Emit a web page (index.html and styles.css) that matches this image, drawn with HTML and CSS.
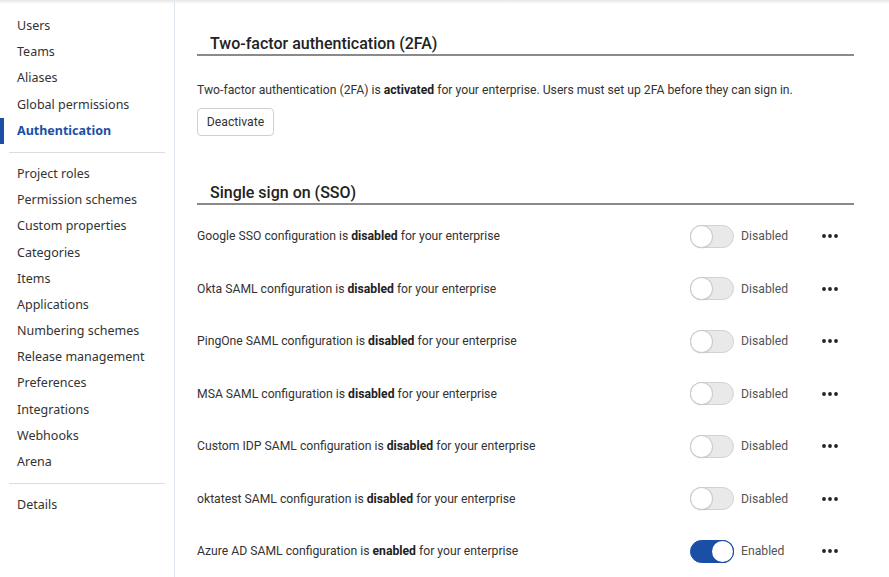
FILE: index.html
```
<!DOCTYPE html>
<html>
<head>
<meta charset="utf-8">
<link rel="stylesheet" href="styles.css">
</head>
<body>
<div class="topshade"></div>
<div class="page">
  <nav class="sidebar">
    <ul class="nav-group">
      <li class="nav-item">Users</li>
      <li class="nav-item">Teams</li>
      <li class="nav-item">Aliases</li>
      <li class="nav-item">Global permissions</li>
      <li class="nav-item active">Authentication</li>
    </ul>
    <hr class="nav-divider">
    <ul class="nav-group">
      <li class="nav-item">Project roles</li>
      <li class="nav-item">Permission schemes</li>
      <li class="nav-item">Custom properties</li>
      <li class="nav-item">Categories</li>
      <li class="nav-item">Items</li>
      <li class="nav-item">Applications</li>
      <li class="nav-item">Numbering schemes</li>
      <li class="nav-item">Release management</li>
      <li class="nav-item">Preferences</li>
      <li class="nav-item">Integrations</li>
      <li class="nav-item">Webhooks</li>
      <li class="nav-item">Arena</li>
    </ul>
    <hr class="nav-divider">
    <ul class="nav-group">
      <li class="nav-item">Details</li>
    </ul>
  </nav>
  <main class="content">
    <section class="section">
      <h2 class="section-title">Two-factor authentication (2FA)</h2>
      <p class="desc">Two-factor authentication (2FA) is <b>activated</b> for your enterprise. Users must set up 2FA before they can sign in.</p>
      <button class="btn">Deactivate</button>
    </section>
    <section class="section sso">
      <h2 class="section-title">Single sign on (SSO)</h2>
      <div class="row">
        <span class="row-text">Google SSO configuration is <b>disabled</b> for your enterprise</span>
        <span class="toggle"><span class="knob"></span></span>
        <span class="state">Disabled</span>
        <svg class="more" viewBox="0 0 16 4"><circle cx="2" cy="2" r="1.9"/><circle cx="8" cy="2" r="1.9"/><circle cx="14" cy="2" r="1.9"/></svg>
      </div>
      <div class="row">
        <span class="row-text">Okta SAML configuration is <b>disabled</b> for your enterprise</span>
        <span class="toggle"><span class="knob"></span></span>
        <span class="state">Disabled</span>
        <svg class="more" viewBox="0 0 16 4"><circle cx="2" cy="2" r="1.9"/><circle cx="8" cy="2" r="1.9"/><circle cx="14" cy="2" r="1.9"/></svg>
      </div>
      <div class="row">
        <span class="row-text">PingOne SAML configuration is <b>disabled</b> for your enterprise</span>
        <span class="toggle"><span class="knob"></span></span>
        <span class="state">Disabled</span>
        <svg class="more" viewBox="0 0 16 4"><circle cx="2" cy="2" r="1.9"/><circle cx="8" cy="2" r="1.9"/><circle cx="14" cy="2" r="1.9"/></svg>
      </div>
      <div class="row">
        <span class="row-text">MSA SAML configuration is <b>disabled</b> for your enterprise</span>
        <span class="toggle"><span class="knob"></span></span>
        <span class="state">Disabled</span>
        <svg class="more" viewBox="0 0 16 4"><circle cx="2" cy="2" r="1.9"/><circle cx="8" cy="2" r="1.9"/><circle cx="14" cy="2" r="1.9"/></svg>
      </div>
      <div class="row">
        <span class="row-text">Custom IDP SAML configuration is <b>disabled</b> for your enterprise</span>
        <span class="toggle"><span class="knob"></span></span>
        <span class="state">Disabled</span>
        <svg class="more" viewBox="0 0 16 4"><circle cx="2" cy="2" r="1.9"/><circle cx="8" cy="2" r="1.9"/><circle cx="14" cy="2" r="1.9"/></svg>
      </div>
      <div class="row">
        <span class="row-text">oktatest SAML configuration is <b>disabled</b> for your enterprise</span>
        <span class="toggle"><span class="knob"></span></span>
        <span class="state">Disabled</span>
        <svg class="more" viewBox="0 0 16 4"><circle cx="2" cy="2" r="1.9"/><circle cx="8" cy="2" r="1.9"/><circle cx="14" cy="2" r="1.9"/></svg>
      </div>
      <div class="row">
        <span class="row-text">Azure AD SAML configuration is <b>enabled</b> for your enterprise</span>
        <span class="toggle on"><span class="knob"></span></span>
        <span class="state">Enabled</span>
        <svg class="more" viewBox="0 0 16 4"><circle cx="2" cy="2" r="1.9"/><circle cx="8" cy="2" r="1.9"/><circle cx="14" cy="2" r="1.9"/></svg>
      </div>
    </section>
  </main>
</div>
</body>
</html>
```
FILE: styles.css
```
* { box-sizing: border-box; }
html, body { margin: 0; padding: 0; background: #fff; }
body {
  width: 889px;
  height: 577px;
  overflow: hidden;
  font-family: Roboto, "Liberation Sans", sans-serif;
  color: #333;
  position: relative;
}
.topshade {
  position: absolute;
  left: 0; top: 0; right: 0;
  height: 4px;
  background: linear-gradient(#e6e6e6, rgba(255,255,255,0));
  z-index: 2;
}
.page {
  display: flex;
  height: 577px;
}
.sidebar {
  width: 175px;
  flex: none;
  border-right: 1px solid #dfe5ec;
  padding-top: 13px;
}
.nav-group {
  list-style: none;
  margin: 0;
  padding: 0;
}
.nav-item {
  height: 26.2px;
  line-height: 26.2px;
  padding-left: 17px;
  font-family: "Noto Sans", sans-serif;
  font-size: 12.5px;
  color: #333;
  position: relative;
  white-space: nowrap;
}
.nav-item.active {
  color: #1b4fa6;
  font-weight: 700;
}
.nav-item.active::before {
  content: "";
  position: absolute;
  left: 0; top: 0;
  width: 4px;
  height: 100%;
  background: #1b4fa6;
}
.nav-divider {
  border: 0;
  border-top: 1px solid #dcdcdc;
  margin: 8px 9px 8px 9px;
  height: 0;
}
.content {
  flex: 1;
  padding: 0 35px 0 22px;
}
.section-title {
  margin: 0;
  font-size: 16px;
  font-weight: 500;
  color: #222;
  padding-left: 13px;
  border-bottom: 2px solid #8a8a8a;
  height: 22px;
  line-height: 20px;
}
.section:first-child .section-title { margin-top: 34px; }
.desc {
  margin: 24px 0 0 0;
  font-size: 12.2px;
  line-height: 20px;
}
.desc b { color: #222; }
.btn {
  margin-top: 8px;
  height: 28px;
  width: 77px;
  padding: 0;
  font-family: Roboto, sans-serif;
  font-size: 12.2px;
  color: #333;
  background: #fff;
  border: 1px solid #cfcfcf;
  border-radius: 4px;
}
.sso { margin-top: 47px; }
.row {
  display: flex;
  align-items: center;
  height: 52.5px;
  font-size: 12.2px;
}
.sso .section-title + .row { margin-top: 5px; }
.row-text { flex: 1; }
.row b { color: #222; }
.toggle {
  width: 44px;
  height: 23px;
  border-radius: 12px;
  background: #e9e9e9;
  border: 1px solid #cfd3d8;
  position: relative;
  margin-right: 7px;
  flex: none;
}
.knob {
  position: absolute;
  top: 0px;
  left: 0px;
  width: 21px;
  height: 21px;
  border-radius: 50%;
  background: #fff;
  box-shadow: 0 0 0 1px #c9cdd2, 0 1px 2px rgba(0,0,0,0.2);
}
.toggle.on {
  background: #1b4fa6;
  border-color: #1b4fa6;
}
.toggle.on .knob { left: 21px; box-shadow: 0 0 0 1px #1b4fa6, 0 1px 2px rgba(0,0,0,0.2); }
.state {
  width: 81px;
  color: #555;
}
.more {
  width: 16px;
  height: 4px;
  margin-right: 16px;
  fill: #222;
  flex: none;
}
```
